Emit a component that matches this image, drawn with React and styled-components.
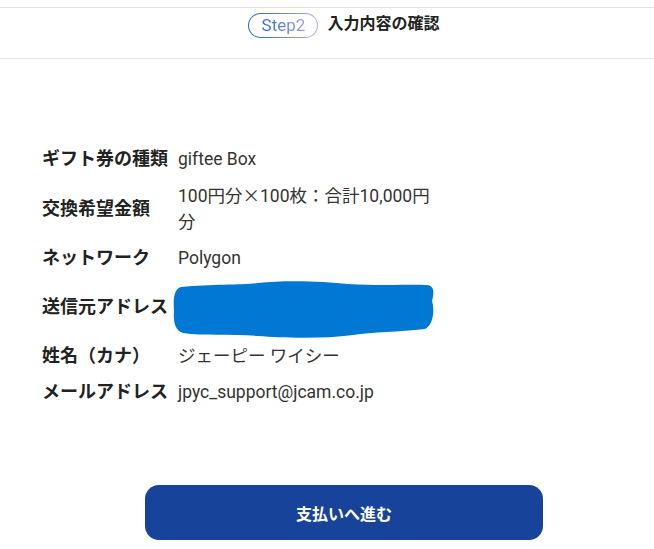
import React from 'react'
import styled, { createGlobalStyle } from 'styled-components';

const GlobalStyle = createGlobalStyle`
    body{
        margin: 0;
        background: #fff;
        font-family: Roboto, "Noto Sans CJK JP", sans-serif;
        color: #222;
    }
`;

const Cjk = styled.span`
    font-family: "Noto Sans CJK JP", sans-serif;
`;

const rows = [
    { label: 'ギフト券の種類', value: 'giftee Box' },
    { label: '交換希望金額', value: <>100円分<Cjk>×</Cjk>100枚：合計10,000円分</> },
    { label: 'ネットワーク', value: 'Polygon' },
    { label: '送信元アドレス', redacted: true },
    { label: '姓名（カナ）', value: 'ジェーピー ワイシー' },
    { label: 'メールアドレス', value: 'jpyc_support@jcam.co.jp' },
];

function Redaction() {
    return (
        <Blob viewBox="0 0 262 57" width="262" height="57">
            <path
                fill="#0078d4"
                d="M8,6 C40,3 70,4 85,2 C110,-1 150,0 175,3 C210,5 240,3 254,4 C262,5 261,12 259,20 C262,30 260,44 252,48 C225,51 200,51 180,54 C150,58 110,57 85,55 C60,53 30,55 10,52 C2,50 0,40 1,30 C0,18 1,8 8,6 Z"
            />
        </Blob>
    )
}

function App() {
    return (
        <PageStyled>
            <GlobalStyle />
            <Header>
                <StepPill><span>Step2</span></StepPill>
                <Title>入力内容の確認</Title>
            </Header>
            <Details>
                {rows.map((r) => (
                    <Row key={r.label}>
                        <Label>{r.label}</Label>
                        {r.redacted ? <Redaction /> : <Value>{r.value}</Value>}
                    </Row>
                ))}
            </Details>
            <Footer>
                <SubmitButton>支払いへ進む</SubmitButton>
            </Footer>
        </PageStyled>
    )
}

const PageStyled = styled.div`
    width: 654px;
    min-height: 549px;
    padding-top: 7px;
    box-sizing: border-box;
`;

const Header = styled.header`
    height: 52px;
    box-sizing: border-box;
    border-top: 1px solid #e2e2e2;
    border-bottom: 1px solid #e6e6e6;
    display: flex;
    justify-content: center;
    align-items: flex-start;
    gap: 9px;
    padding: 5px 0 0 34px;
`;

const StepPill = styled.div`
    width: 70px;
    height: 25px;
    box-sizing: border-box;
    border: 1px solid transparent;
    border-radius: 13px;
    background:
        linear-gradient(#fff, #fff) padding-box,
        linear-gradient(90deg, #1a5fd8, #b4a8f2) border-box;
    display: flex;
    align-items: center;
    justify-content: center;

    span{
        font-size: 17px;
        line-height: 1;
        background: linear-gradient(90deg, #2f6ade, #9a9cf0);
        -webkit-background-clip: text;
        background-clip: text;
        color: transparent;
    }
`;

const Title = styled.h1`
    margin: 0;
    font-size: 16px;
    font-weight: 700;
    line-height: 22px;
    color: #222;
`;

const Details = styled.div`
    display: flex;
    flex-direction: column;
    gap: 10px;
    padding: 87px 0 0 42px;
`;

const Row = styled.div`
    display: grid;
    grid-template-columns: 136px 258px;
    align-items: center;
`;

const Label = styled.div`
    font-size: 18px;
    font-weight: 700;
    line-height: 26px;
    color: #222;
    white-space: nowrap;
`;

const Value = styled.div`
    font-size: 17.5px;
    line-height: 26px;
    color: #333;
`;

const Blob = styled.svg`
    display: block;
    margin: 0 0 -5px -5px;
`;

const Footer = styled.div`
    display: flex;
    padding: 80px 0 0 145px;
`;

const SubmitButton = styled.button`
    width: 398px;
    height: 55px;
    border: none;
    border-radius: 14px;
    background: #17439b;
    color: #fff;
    font-family: inherit;
    font-size: 16px;
    font-weight: 700;
    cursor: pointer;
`;

export default App;
